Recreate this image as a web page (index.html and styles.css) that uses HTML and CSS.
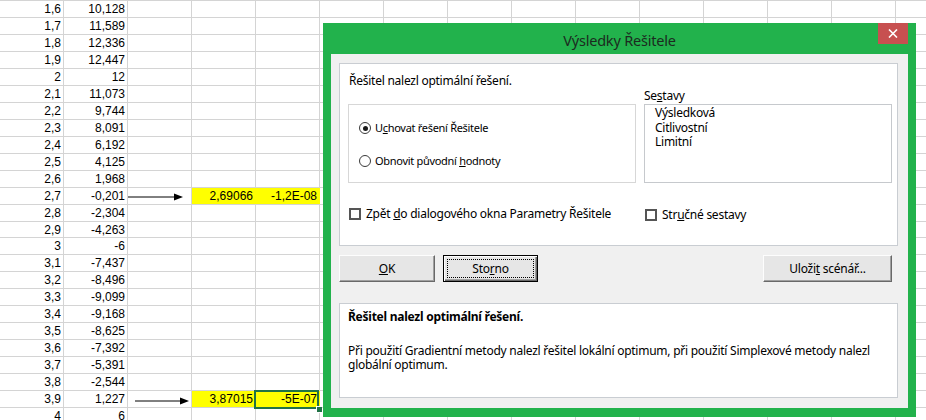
FILE: index.html
```html
<!DOCTYPE html>
<html lang="cs">
<head>
<meta charset="utf-8">
<title>Výsledky Řešitele</title>
<link rel="stylesheet" href="styles.css">
</head>
<body>
<div class="sheet">
  <div class="row"></div>
  <div class="row"><div class="c">1,6</div><div class="c">10,128</div></div>
  <div class="row"><div class="c">1,7</div><div class="c">11,589</div></div>
  <div class="row"><div class="c">1,8</div><div class="c">12,336</div></div>
  <div class="row"><div class="c">1,9</div><div class="c">12,447</div></div>
  <div class="row"><div class="c">2</div><div class="c">12</div></div>
  <div class="row"><div class="c">2,1</div><div class="c">11,073</div></div>
  <div class="row"><div class="c">2,2</div><div class="c">9,744</div></div>
  <div class="row"><div class="c">2,3</div><div class="c">8,091</div></div>
  <div class="row"><div class="c">2,4</div><div class="c">6,192</div></div>
  <div class="row"><div class="c">2,5</div><div class="c">4,125</div></div>
  <div class="row"><div class="c">2,6</div><div class="c">1,968</div></div>
  <div class="row"><div class="c">2,7</div><div class="c">-0,201</div>
    <div class="c arrow-cell"><svg class="arrow a1" width="55" height="8" viewBox="0 0 55 8"><line x1="0" y1="4" x2="47" y2="4" stroke="#000" stroke-width="1"/><polygon points="46,0.5 55,4 46,7.5" fill="#000"/></svg></div>
    <div class="c yellow">2,69066</div><div class="c yellow">-1,2E-08</div></div>
  <div class="row"><div class="c">2,8</div><div class="c">-2,304</div></div>
  <div class="row"><div class="c">2,9</div><div class="c">-4,263</div></div>
  <div class="row"><div class="c">3</div><div class="c">-6</div></div>
  <div class="row"><div class="c">3,1</div><div class="c">-7,437</div></div>
  <div class="row"><div class="c">3,2</div><div class="c">-8,496</div></div>
  <div class="row"><div class="c">3,3</div><div class="c">-9,099</div></div>
  <div class="row"><div class="c">3,4</div><div class="c">-9,168</div></div>
  <div class="row"><div class="c">3,5</div><div class="c">-8,625</div></div>
  <div class="row"><div class="c">3,6</div><div class="c">-7,392</div></div>
  <div class="row"><div class="c">3,7</div><div class="c">-5,391</div></div>
  <div class="row"><div class="c">3,8</div><div class="c">-2,544</div></div>
  <div class="row"><div class="c">3,9</div><div class="c">1,227</div>
    <div class="c arrow-cell"><svg class="arrow a2" width="54" height="8" viewBox="0 0 54 8"><line x1="0" y1="4" x2="46" y2="4" stroke="#000" stroke-width="1"/><polygon points="45,0.5 54,4 45,7.5" fill="#000"/></svg></div>
    <div class="c yellow">3,87015</div><div class="c yellow selected">-5E-07<span class="sel-frame"></span><span class="sel-handle"></span></div></div>
  <div class="row"><div class="c">4</div><div class="c">6</div></div>

  <div class="dialog">
    <div class="titlebar">
      <span class="title">Výsledky Řešitele</span>
      <span class="close"><svg width="10" height="9" viewBox="0 0 10 9"><path d="M1 0.5 L9 8.5 M9 0.5 L1 8.5" stroke="#fff" stroke-width="1.6" fill="none"/></svg></span>
    </div>
    <div class="body">
      <div class="panel panel-top">
        <div class="intro">Řešitel nalezl optimální řešení.</div>
        <div class="cols">
          <div class="spacer"></div>
          <div class="list-label">Se<u>s</u>tavy</div>
          <div class="group">
            <div class="opt"><span class="radio on"></span><span>U<u>c</u>hovat řešení Řešitele</span></div>
            <div class="opt"><span class="radio"></span><span>Obnovit původní <u>h</u>odnoty</span></div>
          </div>
          <div class="listbox">
            <div class="item">Výsledková</div>
            <div class="item">Citlivostní</div>
            <div class="item">Limitní</div>
          </div>
          <div class="check c1"><span class="box"></span><span>Zpět <u>d</u>o dialogového okna Parametry Řešitele</span></div>
          <div class="check c2"><span class="box"></span><span>Str<u>u</u>čné sestavy</span></div>
        </div>
      </div>
      <div class="buttons">
        <div class="btn ok"><span><u>O</u>K</span></div>
        <div class="btn storno"><span>Sto<u>r</u>no</span></div>
        <div class="btn save"><span>Uloži<u>t</u> scénář...</span></div>
      </div>
      <div class="panel panel-bottom">
        <div class="msg-title">Řešitel nalezl optimální řešení.</div>
        <p class="msg">Při použití Gradientní metody nalezl řešitel lokální optimum, při použití Simplexové metody nalezl globální optimum.</p>
      </div>
    </div>
  </div>
</div>
</body>
</html>
```

FILE: styles.css
```css
html, body {
  margin: 0;
  padding: 0;
  background: #fff;
  overflow: hidden;
}

.sheet {
  position: relative;
  width: 926px;
  height: 420px;
  overflow: hidden;
  font-family: "Liberation Sans", Arial, sans-serif;
  font-size: 12px;
  color: #000;
}

.row {
  display: flex;
  height: 16.94px;
  box-sizing: border-box;
  border-bottom: 1px solid #d4d4d4;
  background: repeating-linear-gradient(to right, transparent 0 63px, #d4d4d4 63px 64px);
}

.row:first-child {
  margin-top: -15.6px;
}

.c {
  position: relative;
  flex: none;
  width: 64px;
  box-sizing: border-box;
  padding-right: 3px;
  display: flex;
  align-items: center;
  justify-content: flex-end;
  white-space: nowrap;
}

.arrow-cell {
  justify-content: flex-start;
  padding-right: 0;
}

.arrow { display: block; }
.a1 { margin-left: 0; margin-top: 2px; }
.a2 { margin-left: 7px; margin-top: 5px; }

.yellow {
  background: #ffff00;
}

.sel-frame {
  position: absolute;
  left: -2px;
  top: -1px;
  right: 1px;
  bottom: -2px;
  border: 2px solid #217346;
}

.sel-handle {
  position: absolute;
  right: -2px;
  bottom: -6px;
  width: 5px;
  height: 5px;
  background: #217346;
  border: 1px solid #fff;
  border-right: none;
}

/* Dialog */
.dialog {
  position: absolute;
  left: 323px;
  top: 23px;
  width: 593px;
  height: 394px;
  box-sizing: border-box;
  background: #22b24c;
  padding: 0 8px 9px 8px;
  display: flex;
  flex-direction: column;
  font-family: "Noto Sans", "Open Sans", sans-serif;
  font-size: 12px;
  letter-spacing: -0.25px;
  color: #000;
}

.titlebar {
  position: relative;
  height: 31px;
  flex: none;
  display: flex;
  align-items: center;
  justify-content: center;
  padding-top: 2px;
  box-sizing: border-box;
}

.title {
  font-size: 14.5px;
  letter-spacing: -0.2px;
  color: #1c2a20;
}

.close {
  position: absolute;
  right: 0;
  top: 0;
  width: 30px;
  height: 21px;
  background: #c75050;
  display: flex;
  align-items: center;
  justify-content: center;
}

.close svg { display: block; }

.body {
  flex: 1;
  background: #f0f0f0;
  padding: 9px 10px 9px 8px;
  display: flex;
  flex-direction: column;
}

.panel {
  background: #fff;
  border: 1px solid #c9cdd2;
  box-sizing: border-box;
}

.panel-top {
  height: 183px;
  flex: none;
  padding: 10px 0 0 8px;
}

.intro {
  line-height: 14px;
  margin-left: 1px;
}

.cols {
  display: grid;
  grid-template-columns: 288px 248px;
  column-gap: 8px;
  grid-template-rows: 16px 79px auto;
}

.list-label {
  line-height: 16px;
}

.group {
  border: 1px solid #d7d7d7;
  box-sizing: border-box;
  display: flex;
  flex-direction: column;
  gap: 19px;
  padding: 16px 0 0 10px;
  font-size: 11px;
  letter-spacing: -0.3px;
}

.opt {
  display: flex;
  align-items: center;
  gap: 4px;
  height: 14px;
  line-height: 14px;
}

.radio {
  flex: none;
  width: 12px;
  height: 12px;
  box-sizing: border-box;
  border: 1.5px solid #3a3a3a;
  border-radius: 50%;
  display: flex;
  align-items: center;
  justify-content: center;
}

.radio.on::before {
  content: "";
  width: 5px;
  height: 5px;
  border-radius: 50%;
  background: #1a1a1a;
}

.listbox {
  border: 1px solid #c6c9cd;
  box-sizing: border-box;
  padding: 1px 0 0 10px;
}

.item {
  line-height: 14.7px;
}

.check {
  display: flex;
  align-items: center;
  gap: 5px;
  line-height: 14px;
}

.c1 { margin-top: 23px; margin-left: 1px; }
.c2 { margin-top: 25px; margin-left: 1px; }

.box {
  flex: none;
  width: 12px;
  height: 12px;
  box-sizing: border-box;
  border: 2px solid #555;
  background: #fff;
}

.buttons {
  flex: none;
  display: flex;
  gap: 8px;
  margin-top: 9px;
  padding-right: 6px;
  height: 27px;
}

.btn {
  position: relative;
  box-sizing: border-box;
  height: 27px;
  display: flex;
  align-items: center;
  justify-content: center;
  background: #e6e6e6;
  border: 1px solid;
  border-color: #fdfdfd #696969 #696969 #fdfdfd;
  box-shadow: inset -1px -1px 0 #a0a0a0;
  white-space: nowrap;
}

.ok { width: 96px; }
.storno {
  width: 95px;
  border-color: #000;
  box-shadow: inset 1px 1px 0 #fdfdfd, inset -1px -1px 0 #696969, inset -2px -2px 0 #a0a0a0;
}
.storno::after {
  content: "";
  position: absolute;
  left: 3px;
  top: 3px;
  right: 3px;
  bottom: 3px;
  border: 1px dotted #000;
}
.save { width: 129px; margin-left: auto; }

.panel-bottom {
  margin-top: 21px;
  height: 95px;
  flex: none;
  padding: 6px 8px 0 8px;
}

.msg-title {
  font-weight: bold;
  line-height: 14px;
}

.msg {
  margin: 20px 0 0 0;
  line-height: 14px;
}
```
